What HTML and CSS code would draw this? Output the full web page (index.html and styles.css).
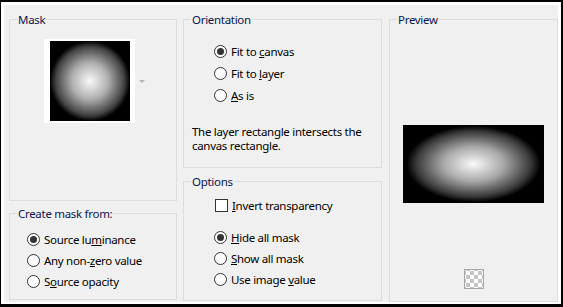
FILE: index.html
```html
<!DOCTYPE html>
<html>
<head>
    <link rel="stylesheet" href="styles.css">
</head>
<body>
    <div class="frame">
        <div class="window">
            <div class="col col-left">
                <fieldset class="group mask-group">
                    <legend>Mask</legend>
                    <div class="mask-picker">
                        <div class="thumb"><div class="thumb-img"></div></div>
                        <span class="drop-arrow"></span>
                    </div>
                </fieldset>
                <fieldset class="group create-group">
                    <legend>Create mask from:</legend>
                    <div class="opts">
                        <label class="opt"><span class="radio checked"></span><span>Source lu<u>m</u>inance</span></label>
                        <label class="opt"><span class="radio"></span><span>Any non-<u>z</u>ero value</span></label>
                        <label class="opt"><span class="radio"></span><span>S<u>o</u>urce opacity</span></label>
                    </div>
                </fieldset>
            </div>

            <div class="col col-mid">
                <fieldset class="group orient-group">
                    <legend>Orientation</legend>
                    <div class="opts">
                        <label class="opt"><span class="radio checked"></span><span>Fit to <u>c</u>anvas</span></label>
                        <label class="opt"><span class="radio"></span><span>Fit to <u>l</u>ayer</span></label>
                        <label class="opt"><span class="radio"></span><span><u>A</u>s is</span></label>
                    </div>
                    <p class="note">The layer rectangle intersects the<br>canvas rectangle.</p>
                </fieldset>
                <fieldset class="group options-group">
                    <legend>Options</legend>
                    <label class="opt check-row"><span class="checkbox"></span><span><u>I</u>nvert transparency</span></label>
                    <div class="opts">
                        <label class="opt"><span class="radio checked"></span><span><u>H</u>ide all mask</span></label>
                        <label class="opt"><span class="radio"></span><span><u>S</u>how all mask</span></label>
                        <label class="opt"><span class="radio"></span><span>Use image <u>v</u>alue</span></label>
                    </div>
                </fieldset>
            </div>

            <div class="col col-right">
                <fieldset class="group preview-group">
                    <legend>Preview</legend>
                    <div class="preview-img"></div>
                    <div class="checker"></div>
                </fieldset>
            </div>
        </div>
    </div>
</body>
</html>
```

FILE: styles.css
```css
body {
    margin: 0;
    padding: 0;
    background: #000;
    font-family: "Noto Sans", "Liberation Sans", sans-serif;
    font-size: 11.5px;
    letter-spacing: -0.3px;
    color: #000;
}

.frame {
    width: 563px;
    height: 307px;
    box-sizing: border-box;
    border-style: solid;
    border-color: #000;
    border-width: 2px 2px 3px 1px;
}

.window {
    height: 100%;
    box-sizing: border-box;
    background: #f0f0f0;
    border: 3px solid #fff;
    border-bottom-width: 2px;
    padding: 7px 0 0 5px;
    display: flex;
}

.col {
    display: flex;
    flex-direction: column;
}

.col-left {
    width: 168px;
    gap: 5px;
}

.col-mid {
    width: 199px;
    margin-left: 6px;
    gap: 6px;
}

.col-right {
    width: 169px;
    margin-left: 7px;
}

.group {
    margin: 0;
    padding: 0 7px;
    border: 1px solid #dcdcdc;
    box-sizing: border-box;
    min-width: 0;
}

.group legend {
    padding: 0 1px;
    line-height: 15px;
    color: #0c1650;
}

.mask-group { height: 189px; }
.create-group { height: 94px; }
.orient-group { height: 156px; }
.options-group { height: 127px; }
.preview-group { height: 290px; }

/* mask thumbnail */
.mask-picker {
    display: flex;
    align-items: center;
    margin: 12px 0 0 27px;
}

.thumb {
    background: #fff;
    padding: 2px 5px 2px 6px;
}

.thumb-img {
    width: 80px;
    height: 80px;
    background: radial-gradient(circle closest-side, #fafafa 0%, #b0b0b0 45%, #444 85%, #000 100%);
}

.drop-arrow {
    margin-left: 4px;
    width: 0;
    height: 0;
    border-left: 3px solid transparent;
    border-right: 3px solid transparent;
    border-top: 3px solid #b4b4b4;
}

/* radio rows */
.opts {
    display: flex;
    flex-direction: column;
}

.opt {
    display: flex;
    align-items: center;
    height: 21px;
    white-space: nowrap;
}

.create-group .opts { margin: 8px 0 0 10px; }
.orient-group .opts { margin: 13px 0 0 23px; }
.orient-group .opt { height: 22px; }
.options-group .opts { margin: 11px 0 0 23px; }

.radio {
    width: 11px;
    height: 11px;
    border: 1px solid #333;
    border-radius: 50%;
    background: #fff;
    margin-right: 4px;
    display: flex;
    align-items: center;
    justify-content: center;
}

.radio.checked::after {
    content: "";
    width: 7px;
    height: 7px;
    border-radius: 50%;
    background: #333;
}

.check-row {
    margin: 5px 0 0 24px;
    height: 22px;
}

.checkbox {
    width: 11px;
    height: 11px;
    border: 1px solid #333;
    background: #fff;
    margin-right: 4px;
}

.note {
    margin: 19px 0 0 1px;
    line-height: 14px;
    white-space: nowrap;
}

/* preview */
.preview-img {
    width: 141px;
    height: 78px;
    margin: 98px auto 0;
    background: #000 radial-gradient(ellipse 67px 38px at 50% 50%, #fafafa 0%, #a8a8a8 45%, #3a3a3a 85%, #000 100%);
}

.checker {
    width: 18px;
    height: 18px;
    margin: 66px auto 0;
    border: 1px solid #a8a8a8;
    background-color: #fff;
    background-image:
        linear-gradient(45deg, #c4c4c4 25%, transparent 25%, transparent 75%, #c4c4c4 75%),
        linear-gradient(45deg, #c4c4c4 25%, transparent 25%, transparent 75%, #c4c4c4 75%);
    background-size: 8px 8px;
    background-position: 1px 1px, 5px 5px;
}
```
